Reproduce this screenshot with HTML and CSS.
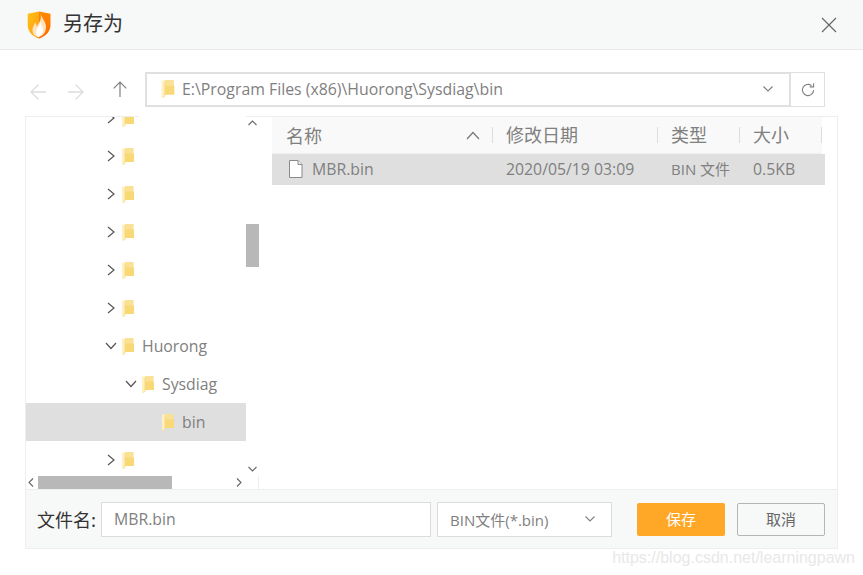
FILE: index.html
```html
<!DOCTYPE html>
<html lang="zh-CN">
<head>
<meta charset="utf-8">
<title>另存为</title>
<link rel="stylesheet" href="styles.css">
</head>
<body>
<svg class="defs" width="0" height="0" aria-hidden="true">
  <defs>
    <symbol id="folder" viewBox="0 0 12 17">
      <path d="M3 0H11.3V5.5H12V14H3Z" fill="#f9d876"/>
      <path d="M3 0H11.3V5.5H3Z" fill="#fbe196"/>
      <path d="M0 .5H2.6L3.2 1.5V15.4L.8 16.8 0 16Z" fill="#fff0bd"/>
      <path d="M3 1.5V15.4L.8 16.8" fill="none" stroke="#f2d27c" stroke-width=".6"/>
    </symbol>
    <symbol id="right" viewBox="0 0 10 12"><path d="M2 1L8 6 2 11" fill="none" stroke="#555" stroke-width="1.2"/></symbol>
    <symbol id="down" viewBox="0 0 12 10"><path d="M1 2L6 7.5 11 2" fill="none" stroke="#555" stroke-width="1.2"/></symbol>
    <symbol id="down-light" viewBox="0 0 12 10"><path d="M1.5 2.5L6 7 10.5 2.5" fill="none" stroke="#808080" stroke-width="1.1"/></symbol>
    <linearGradient id="shield-l" x1="0" y1="0" x2="1" y2="1">
      <stop offset="0" stop-color="#ffc21a"/><stop offset="1" stop-color="#ff9a0a"/>
    </linearGradient>
    <linearGradient id="shield-r" x1="0" y1="0" x2="0" y2="1">
      <stop offset="0" stop-color="#ff8a00"/><stop offset="1" stop-color="#ff6a00"/>
    </linearGradient>
  </defs>
</svg>
<div class="dialog">
  <header class="titlebar">
    <div class="title-left">
      <svg class="logo" width="24" height="28" viewBox="0 0 24 28" aria-hidden="true">
        <path d="M.7 2.8L12 .5V27.5C6 25.5 .7 21 .7 14Z" fill="url(#shield-l)"/>
        <path d="M23.5 2.8L12 .5V27.5C18 25.5 23.5 21 23.5 14Z" fill="url(#shield-r)"/>
        <path d="M13.5 2.5C15 8 19.5 11 19 17 18.6 22 15 25.5 11.5 26 7.5 26 5 22 5.5 18 6 15 7.5 14 8 11.5 9.5 13 9.5 14.5 9.5 15.5 12 12 15 8.5 13.5 2.5Z" fill="#ffe3bd"/>
        <path d="M13.5 11C14.5 15 16.5 17 15.8 20.5 15.2 23.5 12.8 25.5 11 25.5 9 24.5 8.5 21.5 9.5 19 10.5 16.5 13 14.5 13.5 11Z" fill="#fff"/>
      </svg>
      <h1 class="title">另存为</h1>
    </div>
    <svg class="close" width="16" height="16" viewBox="0 0 16 16" aria-label="关闭">
      <path d="M1 1L15 15M15 1L1 15" stroke="#666" stroke-width="1.2" fill="none"/>
    </svg>
  </header>

  <div class="toolbar">
    <div class="nav">
      <svg class="nav-icon" width="16" height="18" viewBox="0 0 16 18"><path d="M16 9H1M8.5 1.5L1 9 8.5 16.5" fill="none" stroke="#dcdcdc" stroke-width="1.3"/></svg>
      <svg class="nav-icon" width="16" height="18" viewBox="0 0 16 18"><path d="M0 9H15M7.5 1.5L15 9 7.5 16.5" fill="none" stroke="#dcdcdc" stroke-width="1.3"/></svg>
      <svg class="nav-icon nav-up" width="14" height="16" viewBox="0 0 14 16"><path d="M7 16V1M.7 7.3L7 1 13.3 7.3" fill="none" stroke="#808080" stroke-width="1.2"/></svg>
    </div>
    <div class="address">
      <svg class="addr-folder" width="14" height="18"><use href="#folder"/></svg>
      <span class="addr-text">E:\Program Files (x86)\Huorong\Sysdiag\bin</span>
      <svg class="addr-down" width="12" height="10"><use href="#down-light"/></svg>
    </div>
    <div class="refresh">
      <svg width="14" height="14" viewBox="0 0 14 14"><path d="M12.6 7A5.6 5.6 0 1 1 10.6 2.7" fill="none" stroke="#808080" stroke-width="1.1"/><path d="M8.6 3.9H12.6V.3" fill="none" stroke="#808080" stroke-width="1.1"/></svg>
    </div>
  </div>

  <main class="panel">
    <div class="panel-main">
      <div class="tree-pane">
        <div class="tree-view">
          <ul class="tree">
            <li class="node d1"><svg class="chev-r" width="10" height="12"><use href="#right"/></svg><svg class="fold" width="12" height="17"><use href="#folder"/></svg></li>
            <li class="node d1"><svg class="chev-r" width="10" height="12"><use href="#right"/></svg><svg class="fold" width="12" height="17"><use href="#folder"/></svg></li>
            <li class="node d1"><svg class="chev-r" width="10" height="12"><use href="#right"/></svg><svg class="fold" width="12" height="17"><use href="#folder"/></svg></li>
            <li class="node d1"><svg class="chev-r" width="10" height="12"><use href="#right"/></svg><svg class="fold" width="12" height="17"><use href="#folder"/></svg></li>
            <li class="node d1"><svg class="chev-r" width="10" height="12"><use href="#right"/></svg><svg class="fold" width="12" height="17"><use href="#folder"/></svg></li>
            <li class="node d1"><svg class="chev-r" width="10" height="12"><use href="#right"/></svg><svg class="fold" width="12" height="17"><use href="#folder"/></svg></li>
            <li class="node d1"><svg class="chev-d" width="12" height="10"><use href="#down"/></svg><svg class="fold" width="12" height="17"><use href="#folder"/></svg><span class="label">Huorong</span></li>
            <li class="node d2"><svg class="chev-d" width="12" height="10"><use href="#down"/></svg><svg class="fold" width="12" height="17"><use href="#folder"/></svg><span class="label">Sysdiag</span></li>
            <li class="node d3 selected"><span class="chev-gap"></span><svg class="fold" width="12" height="17"><use href="#folder"/></svg><span class="label">bin</span></li>
            <li class="node d1"><svg class="chev-r" width="10" height="12"><use href="#right"/></svg><svg class="fold" width="12" height="17"><use href="#folder"/></svg></li>
          </ul>
        </div>
        <div class="vbar">
          <svg class="sb-arrow" width="9" height="6" viewBox="0 0 9 6"><path d="M.5 5L4.5 1 8.5 5" fill="none" stroke="#666" stroke-width="1.1"/></svg>
          <div class="vthumb"></div>
          <svg class="sb-arrow sb-end" width="9" height="6" viewBox="0 0 9 6"><path d="M.5 1L4.5 5 8.5 1" fill="none" stroke="#666" stroke-width="1.1"/></svg>
        </div>
        <div class="hbar">
          <svg class="hb-arrow" width="6" height="9" viewBox="0 0 6 9"><path d="M5 .5L1 4.5 5 8.5" fill="none" stroke="#666" stroke-width="1.1"/></svg>
          <div class="hthumb"></div>
          <svg class="hb-arrow hb-end" width="6" height="9" viewBox="0 0 6 9"><path d="M1 .5L5 4.5 1 8.5" fill="none" stroke="#666" stroke-width="1.1"/></svg>
        </div>
      </div>
      <div class="list">
        <div class="list-head">
          <div class="hcell hname"><span>名称</span><svg width="14" height="9" viewBox="0 0 14 9"><path d="M1 8L7 1.5 13 8" fill="none" stroke="#777" stroke-width="1.2"/></svg></div>
          <div class="hcell">修改日期</div>
          <div class="hcell">类型</div>
          <div class="hcell">大小</div>
        </div>
        <div class="list-row">
          <div class="cell cname">
            <svg width="15" height="18" viewBox="0 0 15 18"><path d="M1.5 .5H10L14 4.5V17.5H1.5Z" fill="#fff" stroke="#8a8a8a"/><path d="M10 .5V4.5H14" fill="#eee" stroke="#8a8a8a"/></svg>
            <span>MBR.bin</span>
          </div>
          <div class="cell">2020/05/19 03:09</div>
          <div class="cell cell-type">BIN <span class="cjk">文件</span></div>
          <div class="cell">0.5KB</div>
        </div>
      </div>
    </div>
    <footer class="panel-foot">
      <label class="fn-label">文件名:</label>
      <div class="field fn-input">MBR.bin</div>
      <div class="field fn-type"><span>BIN<span class="cjk">文件</span>(*.bin)</span><svg width="12" height="10"><use href="#down-light"/></svg></div>
      <button class="btn btn-save">保存</button>
      <button class="btn btn-cancel">取消</button>
    </footer>
  </main>
  <div class="watermark">https://blog.csdn.net/learningpawn</div>
</div>
</body>
</html>
```
FILE: styles.css
```css
* { box-sizing: border-box; }
html, body { margin: 0; padding: 0; background: #fff; }
body { width: 863px; height: 575px; overflow: hidden; font-family: "Open Sans", "Noto Sans CJK SC", sans-serif; color: #808080; }
.defs { display: block; height: 0; }
ul { margin: 0; padding: 0; list-style: none; }
.cjk { font-size: 15px; }

.dialog { display: flex; flex-direction: column; height: 575px; }

.titlebar { height: 50px; flex: none; display: flex; align-items: center; justify-content: space-between; padding: 0 26px 0 27px; background: #f7f8f8; border-bottom: 1px solid #e9e9e9; }
.title-left { display: flex; align-items: center; gap: 12px; }
.logo { display: block; }
.title { margin: -3px 0 0; font-size: 20px; font-weight: 400; line-height: 26px; color: #333; font-family: "Noto Sans CJK SC", sans-serif; }
.close { display: block; }

.toolbar { height: 66px; flex: none; display: flex; align-items: flex-start; padding: 22px 0 0 30px; }
.nav { display: flex; align-items: center; height: 34px; width: 115px; padding-top: 6px; }
.nav-icon { display: block; flex: none; margin-right: 22px; }
.nav-up { margin: -6px 0 0 7px; }
.address { width: 646px; height: 35px; display: flex; align-items: center; padding: 0 15px 2px 14px; border: 2px solid #e0e0e0; background: #fff; }
.addr-folder { flex: none; margin-right: 7px; }
.addr-text { flex: 1; font-size: 15.85px; white-space: nowrap; }
.addr-down { flex: none; }
.refresh { width: 34px; height: 35px; display: flex; align-items: center; justify-content: center; border: 1px solid #e0e0e0; border-left: 0; }
.refresh svg { display: block; }

.panel { width: 813px; height: 433px; flex: none; margin-left: 25px; display: flex; flex-direction: column; border: 1px solid #eee; }
.panel-main { flex: 1; min-height: 0; display: flex; }

.tree-pane { width: 233px; flex: none; position: relative; display: grid; grid-template-columns: 220px 13px; grid-template-rows: 359px 13px; border-right: 1px solid #eee; }
.tree-pane::before { content: ""; position: absolute; left: 113px; top: -1px; width: 107px; height: 1px; background: #fff; }
.tree-view { overflow: hidden; min-width: 0; }
.tree { margin-top: -18px; }
.node { height: 38px; display: flex; align-items: center; }
.node.selected { background: #dfdfdf; }
.d1 { padding-left: 79px; }
.d2 { padding-left: 99px; }
.d3 { padding-left: 119px; }
.chev-r { flex: none; margin-right: 6px; margin-left: 1px; }
.chev-d { flex: none; margin-right: 5px; }
.chev-gap { flex: none; width: 17px; }
.fold { flex: none; }
.label { margin-left: 8px; font-size: 15.8px; white-space: nowrap; }

.vbar { display: flex; flex-direction: column; align-items: center; background: #fff; }
.sb-arrow { display: block; flex: none; margin-top: 3px; }
.vthumb { flex: none; width: 13px; height: 43px; margin-top: 98px; background: #b8b8b8; }
.sb-end { margin-top: auto; margin-bottom: 4px; }
.hbar { display: flex; align-items: center; padding-left: 2px; background: #fff; }
.hb-arrow { display: block; flex: none; }
.hthumb { flex: none; width: 134px; height: 13px; margin-left: 4px; background: #b8b8b8; }
.hb-end { margin-left: 64px; }

.list { flex: 1; min-width: 0; padding-left: 13px; }
.list-head { width: 550px; height: 37px; display: grid; grid-template-columns: 221px 165px 82px 82px; align-items: center; background: #f9f9f9; border-bottom: 1px solid #efefef; }
.hcell { height: 16px; line-height: 15px; padding-left: 13px; font-size: 18px; color: #808080; border-right: 1px solid #ddd; white-space: nowrap; font-family: "Noto Sans CJK SC", sans-serif; }
.hname { display: flex; align-items: center; justify-content: space-between; padding: 0 12px 0 14px; }
.list-row { width: 553px; height: 31px; padding-bottom: 2px; display: grid; grid-template-columns: 221px 165px 82px 85px; align-items: center; background: #dfdfdf; font-size: 15.8px; color: #808080; }
.cell { padding-left: 13px; white-space: nowrap; }
.cell-type { font-size: 15px; }
.cname { display: flex; align-items: center; gap: 9px; padding-left: 16px; }
.cname svg { display: block; flex: none; }

.panel-foot { height: 59px; flex: none; display: flex; align-items: center; padding: 1px 0 0 11px; background: #f7f8f8; border-top: 1px solid #eee; }
.fn-label { width: 64px; flex: none; margin-top: -2px; font-size: 18px; color: #333; white-space: nowrap; font-family: "Noto Sans CJK SC", sans-serif; }
.field { height: 35px; flex: none; display: flex; align-items: center; padding-bottom: 1px; background: #fff; border: 1px solid #dcdcdc; font-size: 15.8px; color: #808080; }
.fn-input { width: 330px; padding-left: 12px; }
.fn-type { width: 175px; margin-left: 6px; padding: 0 15px 1px 12px; justify-content: space-between; white-space: nowrap; font-size: 15px; }
.btn { height: 33px; width: 88px; flex: none; border-radius: 2px; font-size: 15px; font-family: "Noto Sans CJK SC", sans-serif; padding: 0 0 2px; }
.btn-save { margin-left: 25px; background: #ffa726; border: 0; color: #fff; }
.btn-cancel { margin-left: 12px; background: #f7f8f8; border: 1px solid #b5b5b5; color: #666; }

.watermark { align-self: flex-end; margin: 0 8px 0 0; font-family: "Liberation Sans", sans-serif; font-size: 16px; line-height: 18px; color: #e8e8e8; white-space: nowrap; }
```
